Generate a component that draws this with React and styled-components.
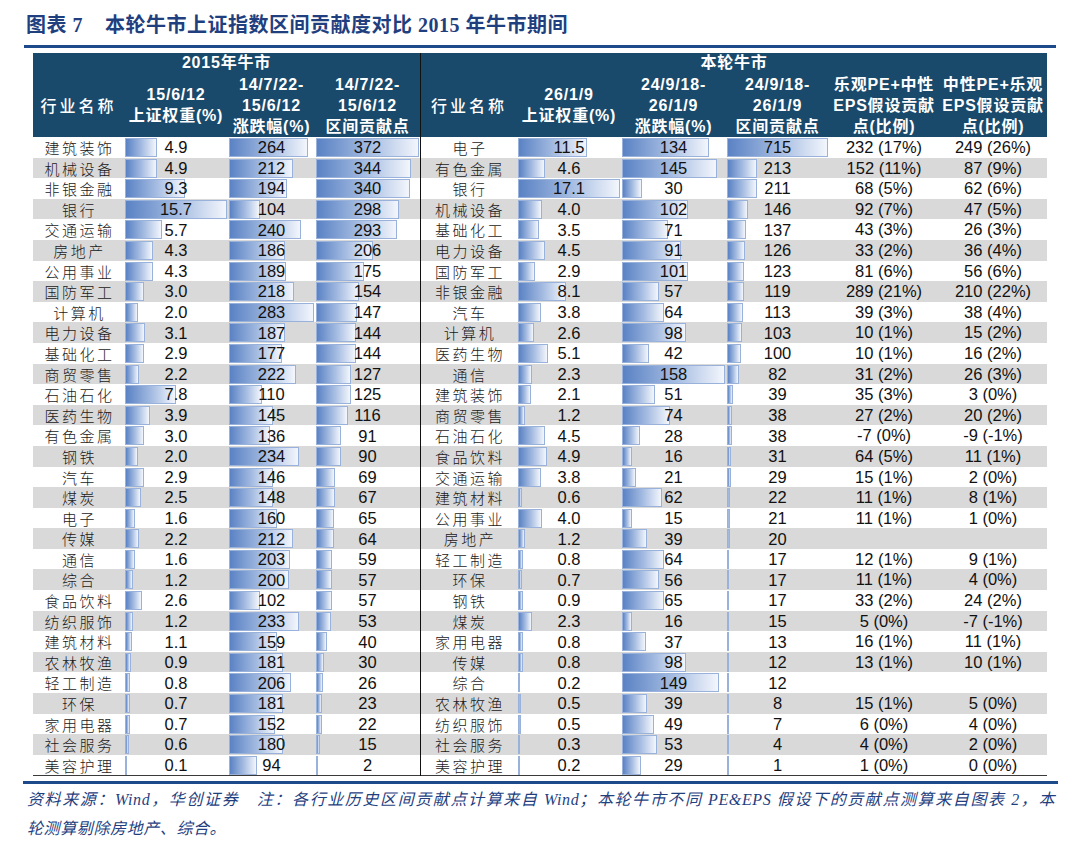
import React from 'react'
import styled, { createGlobalStyle } from 'styled-components'

const GlobalStyle = createGlobalStyle`
  body {
    margin: 0;
    background: #ffffff;
  }
`

const COLS = '91px 104px 87px 105px 97px 104px 105px 103px 110px 108px'
const NAVY = '#1f3f7f'

const left = [
  ['建筑装饰', '4.9', '264', '372'],
  ['机械设备', '4.9', '212', '344'],
  ['非银金融', '9.3', '194', '340'],
  ['银行', '15.7', '104', '298'],
  ['交通运输', '5.7', '240', '293'],
  ['房地产', '4.3', '186', '206'],
  ['公用事业', '4.3', '189', '175'],
  ['国防军工', '3.0', '218', '154'],
  ['计算机', '2.0', '283', '147'],
  ['电力设备', '3.1', '187', '144'],
  ['基础化工', '2.9', '177', '144'],
  ['商贸零售', '2.2', '222', '127'],
  ['石油石化', '7.8', '110', '125'],
  ['医药生物', '3.9', '145', '116'],
  ['有色金属', '3.0', '136', '91'],
  ['钢铁', '2.0', '234', '90'],
  ['汽车', '2.9', '146', '69'],
  ['煤炭', '2.5', '148', '67'],
  ['电子', '1.6', '160', '65'],
  ['传媒', '2.2', '212', '64'],
  ['通信', '1.6', '203', '59'],
  ['综合', '1.2', '200', '57'],
  ['食品饮料', '2.6', '102', '57'],
  ['纺织服饰', '1.2', '233', '53'],
  ['建筑材料', '1.1', '159', '40'],
  ['农林牧渔', '0.9', '181', '30'],
  ['轻工制造', '0.8', '206', '26'],
  ['环保', '0.7', '181', '23'],
  ['家用电器', '0.7', '152', '22'],
  ['社会服务', '0.6', '180', '15'],
  ['美容护理', '0.1', '94', '2'],
]

const right = [
  ['电子', '11.5', '134', '715', '232 (17%)', '249 (26%)'],
  ['有色金属', '4.6', '145', '213', '152 (11%)', '87 (9%)'],
  ['银行', '17.1', '30', '211', '68 (5%)', '62 (6%)'],
  ['机械设备', '4.0', '102', '146', '92 (7%)', '47 (5%)'],
  ['基础化工', '3.5', '71', '137', '43 (3%)', '26 (3%)'],
  ['电力设备', '4.5', '91', '126', '33 (2%)', '36 (4%)'],
  ['国防军工', '2.9', '101', '123', '81 (6%)', '56 (6%)'],
  ['非银金融', '8.1', '57', '119', '289 (21%)', '210 (22%)'],
  ['汽车', '3.8', '64', '113', '39 (3%)', '38 (4%)'],
  ['计算机', '2.6', '98', '103', '10 (1%)', '15 (2%)'],
  ['医药生物', '5.1', '42', '100', '10 (1%)', '16 (2%)'],
  ['通信', '2.3', '158', '82', '31 (2%)', '26 (3%)'],
  ['建筑装饰', '2.1', '51', '39', '35 (3%)', '3 (0%)'],
  ['商贸零售', '1.2', '74', '38', '27 (2%)', '20 (2%)'],
  ['石油石化', '4.5', '28', '38', '-7 (0%)', '-9 (-1%)'],
  ['食品饮料', '4.9', '16', '31', '64 (5%)', '11 (1%)'],
  ['交通运输', '3.8', '21', '29', '15 (1%)', '2 (0%)'],
  ['建筑材料', '0.6', '62', '22', '11 (1%)', '8 (1%)'],
  ['公用事业', '4.0', '15', '21', '11 (1%)', '1 (0%)'],
  ['房地产', '1.2', '39', '20', '', ''],
  ['轻工制造', '0.8', '64', '17', '12 (1%)', '9 (1%)'],
  ['环保', '0.7', '56', '17', '11 (1%)', '4 (0%)'],
  ['钢铁', '0.9', '65', '17', '33 (2%)', '24 (2%)'],
  ['煤炭', '2.3', '16', '15', '5 (0%)', '-7 (-1%)'],
  ['家用电器', '0.8', '37', '13', '16 (1%)', '11 (1%)'],
  ['传媒', '0.8', '98', '12', '13 (1%)', '10 (1%)'],
  ['综合', '0.2', '149', '12', '', ''],
  ['农林牧渔', '0.5', '39', '8', '15 (1%)', '5 (0%)'],
  ['纺织服饰', '0.5', '49', '7', '6 (0%)', '4 (0%)'],
  ['社会服务', '0.3', '53', '4', '4 (0%)', '2 (0%)'],
  ['美容护理', '0.2', '29', '1', '1 (0%)', '0 (0%)'],
]

// max per bar column, used for the data bar lengths
const colMax = (rows, i) => Math.max(...rows.map(r => parseFloat(r[i])))
const leftMax = [1, 2, 3].map(i => colMax(left, i))
const rightMax = [1, 2, 3].map(i => colMax(right, i))

const headLeft = [
  ['15/6/12', '上证权重(%)'],
  ['14/7/22-', '15/6/12', '涨跌幅(%)'],
  ['14/7/22-', '15/6/12', '区间贡献点'],
]
const headRight = [
  ['26/1/9', '上证权重(%)'],
  ['24/9/18-', '26/1/9', '涨跌幅(%)'],
  ['24/9/18-', '26/1/9', '区间贡献点'],
  ['乐观PE+中性', 'EPS假设贡献', '点(比例)'],
  ['中性PE+乐观', 'EPS假设贡献', '点(比例)'],
]

const Page = styled.div`
  width: 1080px;
  height: 854px;
  padding-top: 9px;
  box-sizing: border-box;
  background: #ffffff;
`

const Title = styled.h1`
  margin: 0 0 0 26px;
  display: flex;
  align-items: center;
  height: 28px;
  font-family: "Liberation Serif", "Noto Sans CJK SC", serif;
  font-size: 20px;
  font-weight: 700;
  letter-spacing: 0.5px;
  color: ${NAVY};
`

const TitleNo = styled.span`
  margin-right: 22px;
`

const Rule = styled.div`
  margin: ${({ $top }) => $top}px 0 0 ${({ $left }) => $left}px;
  width: ${({ $width }) => $width}px;
  height: 3px;
  background: #1d4a8a;
`

const Table = styled.div`
  margin: 5px 0 0 33px;
  width: 1014px;
  border-bottom: 1px solid #3a3a3a;
`

const Head = styled.div`
  display: grid;
  grid-template-columns: ${COLS};
  grid-template-rows: 20px 64px;
  background: #1a4a6b;
  color: #ffffff;
  font-family: "Liberation Sans", "Noto Sans CJK SC", sans-serif;
  font-weight: 700;
  font-size: 16px;
  letter-spacing: 0.8px;
`

const GroupLabel = styled.div`
  grid-column: ${({ $span }) => $span};
  grid-row: 1;
  display: flex;
  justify-content: center;
  align-items: flex-end;
  line-height: 20px;
  padding-top: 2px;
  border-left: ${({ $divider }) => ($divider ? '1px solid #111' : 'none')};
`

const ColHead = styled.div`
  grid-row: ${({ $rows }) => $rows};
  display: flex;
  flex-direction: column;
  justify-content: center;
  align-items: center;
  line-height: 21px;
  white-space: nowrap;
  border-left: ${({ $divider }) => ($divider ? '1px solid #111' : 'none')};
`

const NameHead = styled(ColHead)`
  font-weight: 500;
  letter-spacing: 3px;
  padding-top: 2px;
`

const Row = styled.div`
  display: grid;
  grid-template-columns: ${COLS};
  height: 20.6px;
  background: ${({ $shade }) => ($shade ? '#d9d9d9' : '#ffffff')};
  font-family: "Liberation Sans", Arial, sans-serif;
  font-size: 16.5px;
  color: #111;
`

const NameCell = styled.div`
  display: flex;
  justify-content: center;
  align-items: center;
  font-family: "Noto Sans CJK SC", sans-serif;
  font-size: 15px;
  font-weight: 300;
  letter-spacing: 2.5px;
  padding-left: 2px;
  color: #1a1a1a;
  border-left: ${({ $divider }) => ($divider ? '1px solid #111' : 'none')};
`

const BarCell = styled.div`
  display: grid;
  grid-template-columns: minmax(0, 1fr);
  padding: 1px 1px 1px 1px;

  & > * {
    grid-area: 1 / 1;
  }
`

const Bar = styled.div`
  justify-self: start;
  align-self: stretch;
  box-sizing: border-box;
  min-width: 2px;
  border: 1px solid #98b2dc;
  background: linear-gradient(to right, #5a82c4 0%, #a9bfe3 55%, #f3f6fc 100%);
`

const Value = styled.span`
  justify-self: center;
  align-self: center;
  line-height: 1;
`

const TextCell = styled.div`
  display: flex;
  justify-content: center;
  align-items: center;
  white-space: nowrap;
`

const Note = styled.div`
  margin: 1px 0 0 27px;
  width: 1028px;
  font-family: "Liberation Serif", "Noto Sans CJK SC", serif;
  font-style: italic;
  font-size: 16px;
  line-height: 29px;
  letter-spacing: 0.6px;
  color: ${NAVY};
`

const NoteLine = styled.div`
  text-align: ${({ $full }) => ($full ? 'justify' : 'left')};
  text-align-last: ${({ $full }) => ($full ? 'justify' : 'auto')};
`

const BarValue = ({ value, max }) => (
  <BarCell>
    <Bar style={{ width: `${(parseFloat(value) / max) * 100}%` }} />
    <Value>{value}</Value>
  </BarCell>
)

const HeadLines = ({ lines }) => lines.map(l => <span key={l}>{l}</span>)

const App = () => {
  return (
    <Page>
      <GlobalStyle />
      <Title>
        <TitleNo>图表 7</TitleNo>
        本轮牛市上证指数区间贡献度对比 2015 年牛市期间
      </Title>
      <Rule $top={8} $left={24} $width={1032} />

      <Table>
        <Head>
          <GroupLabel $span="1 / 5">2015年牛市</GroupLabel>
          <GroupLabel $span="5 / 11" $divider>本轮牛市</GroupLabel>
          <NameHead $rows={2}>行业名称</NameHead>
          {headLeft.map((h, i) => (
            <ColHead key={'l' + i} $rows={2}>
              <HeadLines lines={h} />
            </ColHead>
          ))}
          <NameHead $rows={2} $divider>行业名称</NameHead>
          {headRight.map((h, i) => (
            <ColHead key={'r' + i} $rows={2}>
              <HeadLines lines={h} />
            </ColHead>
          ))}
        </Head>

        {left.map((l, i) => {
          const r = right[i]
          return (
            <Row key={i} $shade={i % 2 === 1}>
              <NameCell>{l[0]}</NameCell>
              <BarValue value={l[1]} max={leftMax[0]} />
              <BarValue value={l[2]} max={leftMax[1]} />
              <BarValue value={l[3]} max={leftMax[2]} />
              <NameCell $divider>{r[0]}</NameCell>
              <BarValue value={r[1]} max={rightMax[0]} />
              <BarValue value={r[2]} max={rightMax[1]} />
              <BarValue value={r[3]} max={rightMax[2]} />
              <TextCell>{r[4]}</TextCell>
              <TextCell>{r[5]}</TextCell>
            </Row>
          )
        })}
      </Table>

      <Rule $top={5} $left={23} $width={1035} />

      <Note>
        <NoteLine $full>
          资料来源：Wind，华创证券　注：各行业历史区间贡献点计算来自 Wind；本轮牛市不同 PE&amp;EPS 假设下的贡献点测算来自图表 2，本
        </NoteLine>
        <NoteLine>轮测算剔除房地产、综合。</NoteLine>
      </Note>
    </Page>
  )
}

export default App
